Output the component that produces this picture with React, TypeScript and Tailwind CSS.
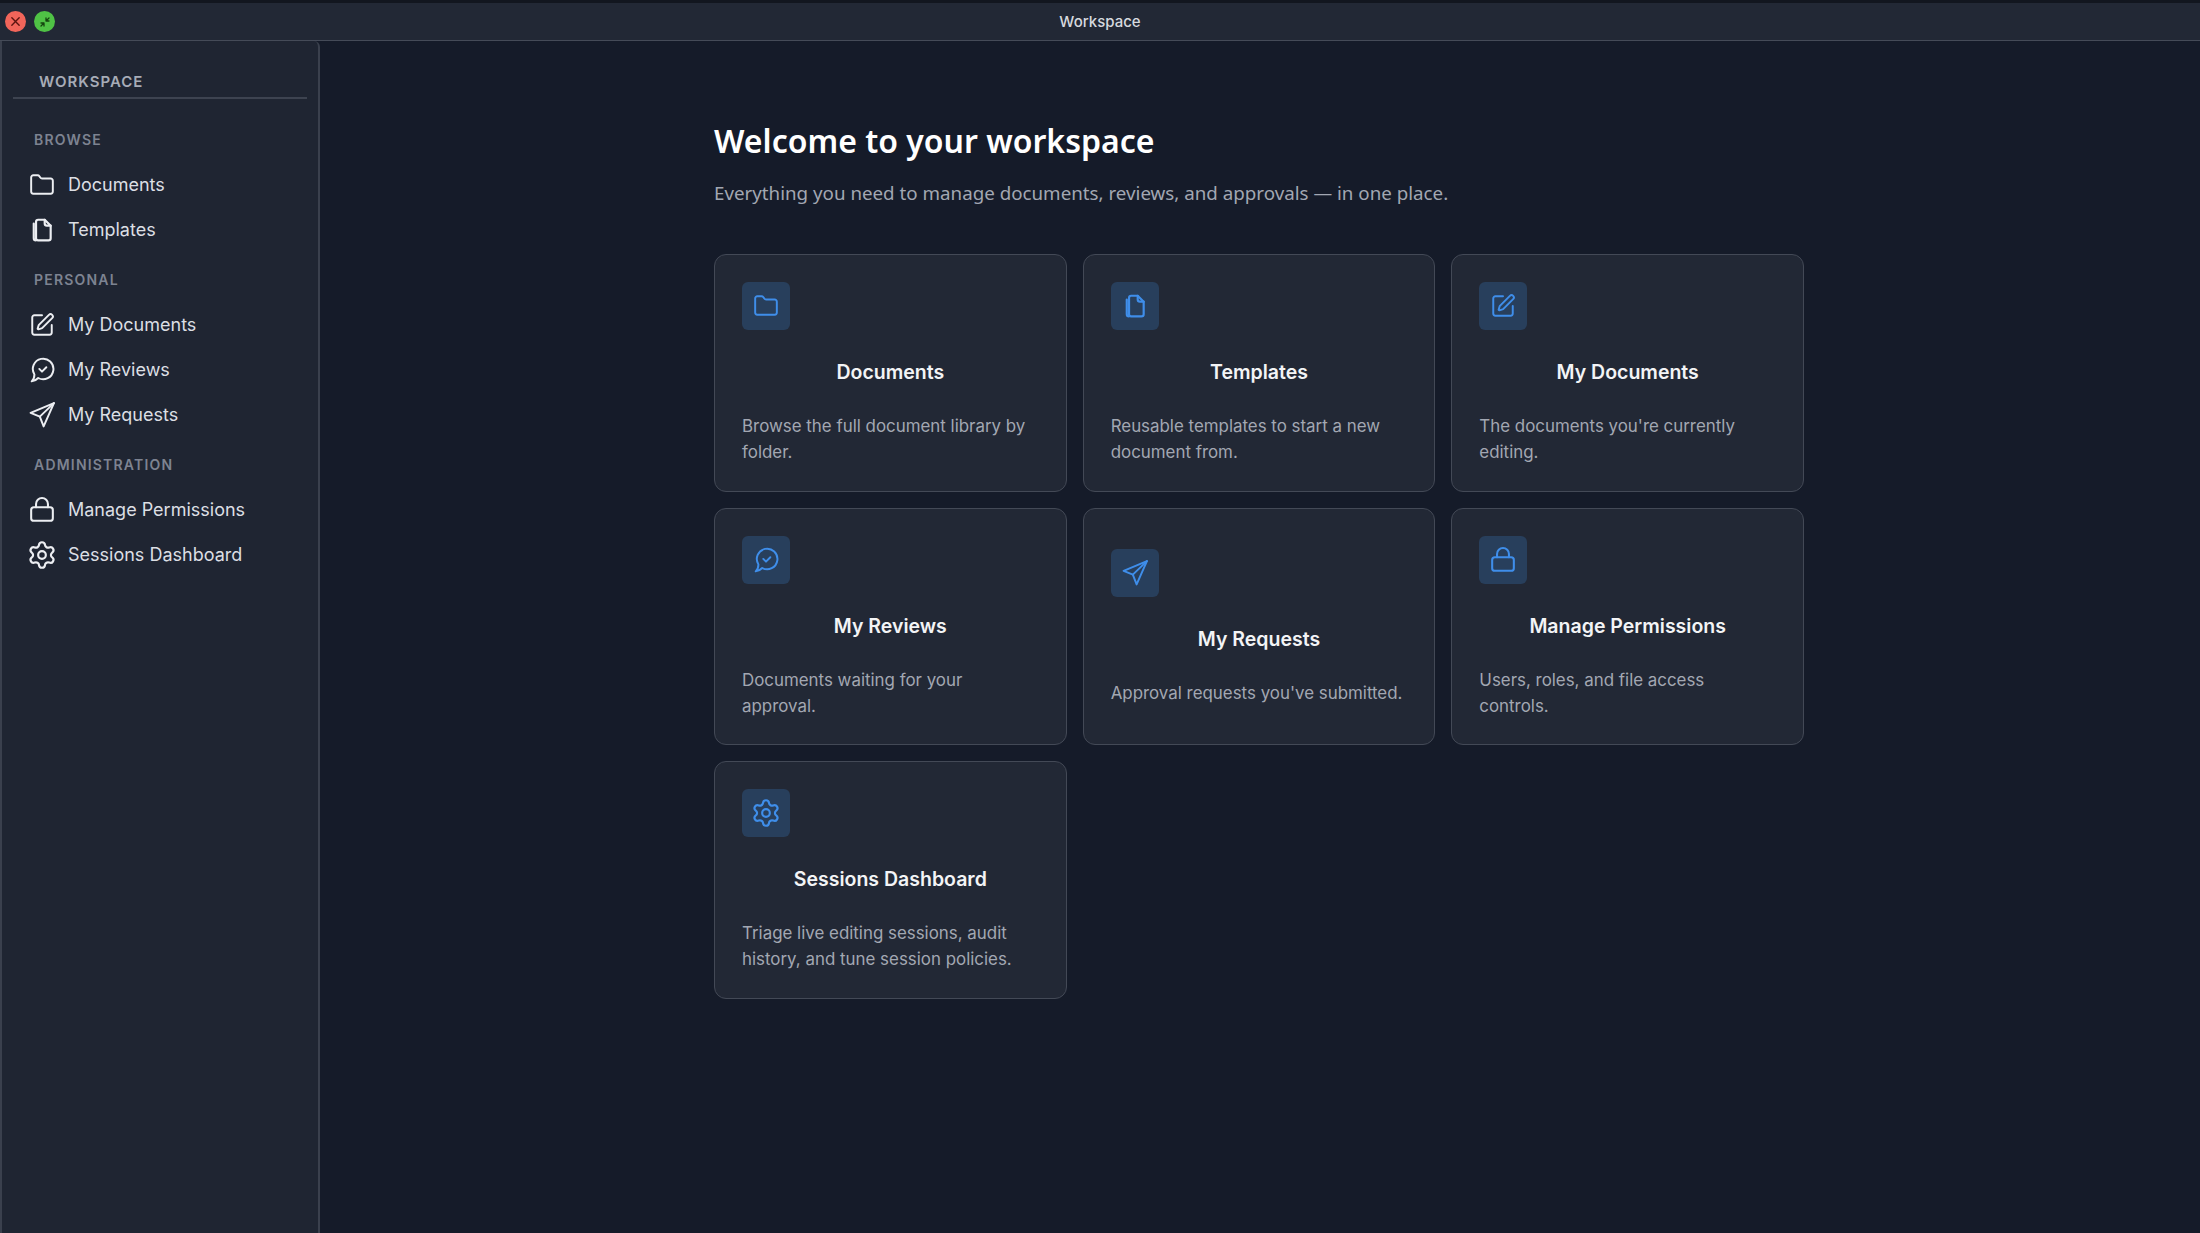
import { Folder, Settings, SquarePen } from "lucide-react";
import type { ReactNode } from "react";

const TemplateIcon = ({ className }: { className: string }) => (
  <svg viewBox="0 0 24 24" fill="none" stroke="currentColor" strokeWidth="2" strokeLinecap="round" strokeLinejoin="round" className={className}>
    <path d="M8.5 2.5h6l5.5 5.5v11.5a2 2 0 0 1-2 2H8.5a2 2 0 0 1-2-2v-15a2 2 0 0 1 2-2z" />
    <path d="M14.5 2.5v3.5a2 2 0 0 0 2 2h3.5" />
    <path d="M4.4 6v13.5a2 2 0 0 0 2 2" />
  </svg>
);

const ReviewIcon = ({ className }: { className: string }) => (
  <svg viewBox="0 0 24 24" fill="none" stroke="currentColor" strokeWidth="1.8" strokeLinecap="round" strokeLinejoin="round" className={className}>
    <path d="M2.5 22.5C4 21 5 18.5 5 16.1A9.5 9.5 0 1 1 8.5 19.4C7 21 5 22.3 2.5 22.5z" />
    <path d="M9.5 11l2.5 2.5 4-4" />
  </svg>
);

const SendIcon = ({ className }: { className: string }) => (
  <svg viewBox="0 0 24 24" fill="none" stroke="currentColor" strokeWidth="1.8" strokeLinecap="round" strokeLinejoin="round" className={className}>
    <path d="M23 1L1.5 10l8.5 3.5 3.5 9L23 1z" />
    <path d="M10 13.5L23 1" />
  </svg>
);

const LockIcon = ({ className }: { className: string }) => (
  <svg viewBox="0 0 24 24" fill="none" stroke="currentColor" strokeWidth="1.9" strokeLinecap="round" strokeLinejoin="round" className={className}>
    <rect x="2" y="9.5" width="20" height="12.5" rx="2.5" />
    <path d="M6.5 9.5V6.5a5.5 5.5 0 0 1 11 0v3" />
  </svg>
);

type Item = {
  title: string;
  desc: string;
  icon: (cls: string) => ReactNode;
};

const docs: Item = {
  title: "Documents",
  desc: "Browse the full document library by folder.",
  icon: (c) => <Folder className={c} strokeWidth={1.8} />,
};
const templates: Item = {
  title: "Templates",
  desc: "Reusable templates to start a new document from.",
  icon: (c) => <TemplateIcon className={c} />,
};
const myDocs: Item = {
  title: "My Documents",
  desc: "The documents you're currently editing.",
  icon: (c) => <SquarePen className={c} strokeWidth={1.8} />,
};
const reviews: Item = {
  title: "My Reviews",
  desc: "Documents waiting for your approval.",
  icon: (c) => <ReviewIcon className={c} />,
};
const requests: Item = {
  title: "My Requests",
  desc: "Approval requests you've submitted.",
  icon: (c) => <SendIcon className={c} />,
};
const perms: Item = {
  title: "Manage Permissions",
  desc: "Users, roles, and file access controls.",
  icon: (c) => <LockIcon className={c} />,
};
const sessions: Item = {
  title: "Sessions Dashboard",
  desc: "Triage live editing sessions, audit history, and tune session policies.",
  icon: (c) => <Settings className={`${c} scale-[1.18]`} strokeWidth={1.7} />,
};

const cards = [docs, templates, myDocs, reviews, requests, perms, sessions];

function NavSection({ label, items }: { label: string; items: Item[] }) {
  return (
    <div className="flex flex-col">
      <p className="pl-[32px] h-[20px] leading-[20px] text-[14px] font-semibold tracking-[1.2px] text-[#7d8391]">{label}</p>
      <div className="mt-[12px] flex flex-col">
        {items.map((item) => (
          <div key={item.title} className="flex h-[45px] items-center pl-[27px]">
            {item.icon("w-[26px] h-[26px] text-[#eceef2] shrink-0")}
            <span className="ml-[13px] text-[18px] text-[#dcdfe4]">{item.title}</span>
          </div>
        ))}
      </div>
    </div>
  );
}

function Card({ item }: { item: Item }) {
  return (
    <div className="flex h-[237.6px] flex-col justify-center rounded-[12px] border border-[#434956] bg-[#222835] px-[27px] pt-[2px]">
      <div className="flex h-[48px] w-[48px] items-center justify-center rounded-[6px] bg-[#283f5c]">
        {item.icon("w-[26px] h-[26px] text-[#3f8eea]")}
      </div>
      <p className="mt-[30px] text-center text-[19.5px] leading-[24px] font-semibold text-[#f3f4f6]">{item.title}</p>
      <p className="mt-[29px] text-[16.9px] leading-[26px] text-[#a2a7b2]">{item.desc}</p>
    </div>
  );
}

export default function App() {
  return (
    <div className="flex h-[1233px] w-[2200px] flex-col overflow-hidden bg-[#151b29] font-['Inter',sans-serif]">
      <div className="relative flex h-[41px] shrink-0 items-center justify-center border-t-[3px] border-b border-t-[#12161f] border-b-[#454b58] bg-[#222835] pt-[2px]">
        <div className="absolute left-[5px] top-[8px] flex gap-[8px]">
          <div className="flex h-[21px] w-[21px] items-center justify-center rounded-full bg-[#f2655a]">
            <svg viewBox="0 0 12 12" className="h-[11px] w-[11px]" stroke="#5c1410" strokeWidth="1.5" strokeLinecap="round">
              <path d="M2 2l8 8M10 2l-8 8" />
            </svg>
          </div>
          <div className="flex h-[21px] w-[21px] items-center justify-center rounded-full bg-[#4fc245]">
            <svg viewBox="0 0 12 12" className="h-[12px] w-[12px]" stroke="#14440f" strokeWidth="1.3" strokeLinecap="round" fill="#14440f">
              <path d="M7 5V2M7 5h3M7 5l3-3M5 7v3M5 7H2M5 7l-3 3" />
            </svg>
          </div>
        </div>
        <span className="text-[15px] font-medium text-[#d6d9df]">Workspace</span>
      </div>
      <div className="flex min-h-0 flex-1">
        <aside className="flex w-[320px] shrink-0 flex-col rounded-tr-[6px] border-r-[2px] border-l-[2px] border-r-[#3a404d] border-l-[#3a404d] bg-[#1f2532]">
          <div className="mx-[11px] mt-[31px] h-[27px] border-b-[2px] border-[#3d4350] pl-[26px]">
            <span className="block text-[15px] leading-[20px] font-semibold tracking-[1px] text-[#a7acb7]">WORKSPACE</span>
          </div>
          <div className="mt-[31px] flex flex-col gap-[18px]">
            <NavSection label="BROWSE" items={[docs, templates]} />
            <NavSection label="PERSONAL" items={[myDocs, reviews, requests]} />
            <NavSection label="ADMINISTRATION" items={[perms, sessions]} />
          </div>
        </aside>
        <main className="flex-1 pl-[394px] pr-[396px] pt-[76px]">
          <h1 className="font-['Noto_Sans',sans-serif] text-[32px] leading-[48px] font-semibold text-white">Welcome to your workspace</h1>
          <p className="mt-[12px] font-['Noto_Sans',sans-serif] text-[18.75px] leading-[32px] text-[#a2a7b2]">Everything you need to manage documents, reviews, and approvals — in one place.</p>
          <div className="mt-[45px] grid grid-cols-3 gap-[16px]">
            {cards.map((c) => (
              <Card key={c.title} item={c} />
            ))}
          </div>
        </main>
      </div>
    </div>
  );
}
